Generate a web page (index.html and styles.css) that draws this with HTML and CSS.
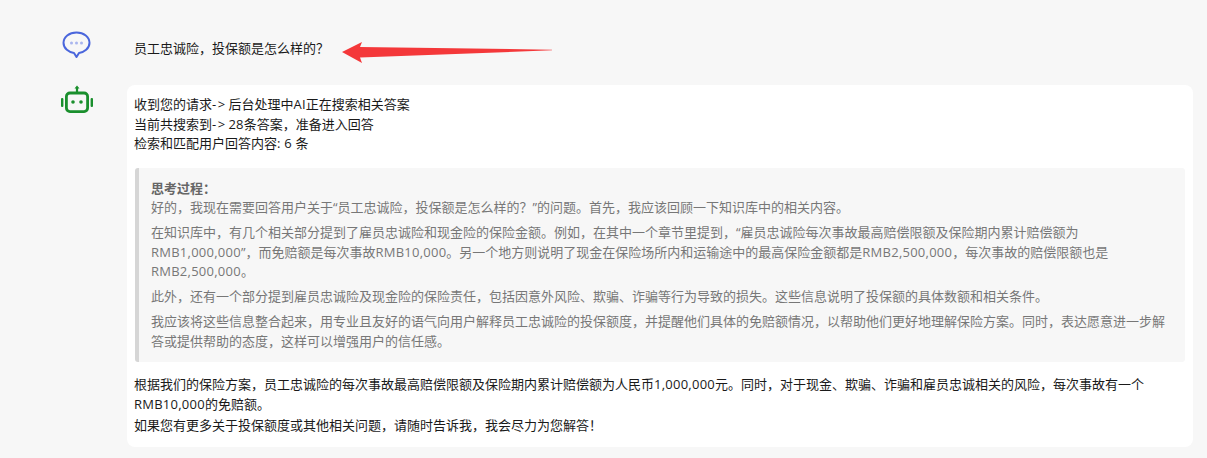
FILE: index.html
```html
<!DOCTYPE html>
<html lang="zh">
<head>
<meta charset="utf-8">
<title>对话</title>
<link rel="stylesheet" href="styles.css">
</head>
<body>
<main class="chat">
  <section class="row user-row">
    <div class="avatar">
      <svg class="icon icon-user" width="31" height="30" viewBox="0 0 31 30" fill="none">
        <path d="M15.5 2.5C8.1 2.5 2.5 6.9 2.5 12.7 2.5 18.5 8 22.5 13 23L15.5 27 18 23C23 22.5 28.5 18.5 28.5 12.7 28.5 6.9 22.9 2.5 15.5 2.5Z" stroke="#4a66dc" stroke-width="2" stroke-linejoin="round"/>
        <circle cx="10.5" cy="13" r="1.5" fill="#a9b5ee"/>
        <circle cx="15.5" cy="13" r="1.5" fill="#a9b5ee"/>
        <circle cx="20.5" cy="13" r="1.5" fill="#a9b5ee"/>
      </svg>
    </div>
    <p class="question">员工忠诚险，投保额是怎么样的？</p>
    <svg class="arrow" width="214" height="24" viewBox="0 0 214 24">
      <path d="M2 12 22 2 20 7 212 9.7 212 10.3 20 17.5 22 23Z" fill="#f4383a"/>
    </svg>
  </section>
  <section class="row bot-row">
    <div class="avatar">
      <svg class="icon" width="34" height="30" viewBox="0 0 34 30" fill="none">
        <path d="M17 2V8" stroke="#1a8f2d" stroke-width="2.2"/>
        <path d="M14.5 3.5 17 0.5 19.5 3.5Z" fill="#1a8f2d"/>
        <rect x="6.4" y="8" width="21.2" height="18.6" rx="3.5" stroke="#1a8f2d" stroke-width="2.8"/>
        <circle cx="13" cy="17" r="1.8" fill="#1a8f2d"/>
        <circle cx="21" cy="17" r="1.8" fill="#1a8f2d"/>
        <rect x="1" y="13" width="2.4" height="9" rx="1" fill="#1a8f2d"/>
        <rect x="30.6" y="13" width="2.4" height="9" rx="1" fill="#1a8f2d"/>
      </svg>
    </div>
    <article class="card">
      <p class="status">收到您的请求<span class="sym">-&gt;</span>后台处理中<span class="lat">AI</span>正在搜索相关答案<br>当前共搜索到<span class="sym">-&gt;</span><span class="lat">28</span>条答案，准备进入回答<br>检索和匹配用户回答内容<span class="lat">: 6</span> 条</p>
      <blockquote class="thinking">
        <p><strong>思考过程：</strong><br>好的，我现在需要回答用户关于“员工忠诚险，投保额是怎么样的？”的问题。首先，我应该回顾一下知识库中的相关内容。</p>
        <p>在知识库中，有几个相关部分提到了雇员忠诚险和现金险的保险金额。例如，在其中一个章节里提到，“雇员忠诚险每次事故最高赔偿限额及保险期内累计赔偿额为<span class="lat">RMB1,000,000</span>”，而免赔额是每次事故<span class="lat">RMB10,000</span>。另一个地方则说明了现金在保险场所内和运输途中的最高保险金额都是<span class="lat">RMB2,500,000</span>，每次事故的赔偿限额也是<span class="lat">RMB2,500,000</span>。</p>
        <p>此外，还有一个部分提到雇员忠诚险及现金险的保险责任，包括因意外风险、欺骗、诈骗等行为导致的损失。这些信息说明了投保额的具体数额和相关条件。</p>
        <p>我应该将这些信息整合起来，用专业且友好的语气向用户解释员工忠诚险的投保额度，并提醒他们具体的免赔额情况，以帮助他们更好地理解保险方案。同时，表达愿意进一步解答或提供帮助的态度，这样可以增强用户的信任感。</p>
      </blockquote>
      <p class="answer">根据我们的保险方案，员工忠诚险的每次事故最高赔偿限额及保险期内累计赔偿额为人民币<span class="lat">1,000,000</span>元。同时，对于现金、欺骗、诈骗和雇员忠诚相关的风险，每次事故有一个<span class="lat">RMB10,000</span>的免赔额。</p>
      <p class="answer">如果您有更多关于投保额度或其他相关问题，请随时告诉我，我会尽力为您解答！</p>
    </article>
  </section>
</main>
</body>
</html>
```
FILE: styles.css
```css
* { box-sizing: border-box; }
html, body { margin: 0; height: 100%; }
body {
  background: #f7f7f7;
  color: #1a1a1a;
  font-family: "Open Sans", "Noto Sans CJK SC", sans-serif;
  font-size: 13px;
  line-height: 19.5px;
  overflow: hidden;
}
.chat { display: flex; flex-direction: column; padding: 29px 14px 0 60px; gap: 25px; }
.row { display: flex; align-items: flex-start; }
.avatar { width: 67px; flex: none; }
.icon { display: block; }
.icon-user { margin-left: 1px; }
.user-row { height: 31px; align-items: center; }
.question { margin: 0 0 0 7px; padding-top: 8px; }
.arrow { margin: 14px 0 0 11px; flex: none; }
.card {
  flex: 1;
  background: #fff;
  border-radius: 8px;
  padding: 10px 8px 11.5px 7px;
}
.lat { letter-spacing: 0.25px; }
.sym { letter-spacing: 1.6px; padding-right: 1.6px; }
.status { margin: 0 0 14px; }
.thinking {
  margin: 0 0 13px 1px;
  padding: 11px 10px 11px 12px;
  background: #f7f7f7;
  border-left: 4px solid #d6d6d6;
  border-radius: 3px;
  color: #777;
}
.thinking p { margin: 0 0 5.5px; }
.thinking p:last-child { margin-bottom: 0; }
.thinking strong { font-weight: 700; color: #666; }
.answer { margin: 0 0 1.5px; }
.answer:last-child { margin-bottom: 0; }
```
